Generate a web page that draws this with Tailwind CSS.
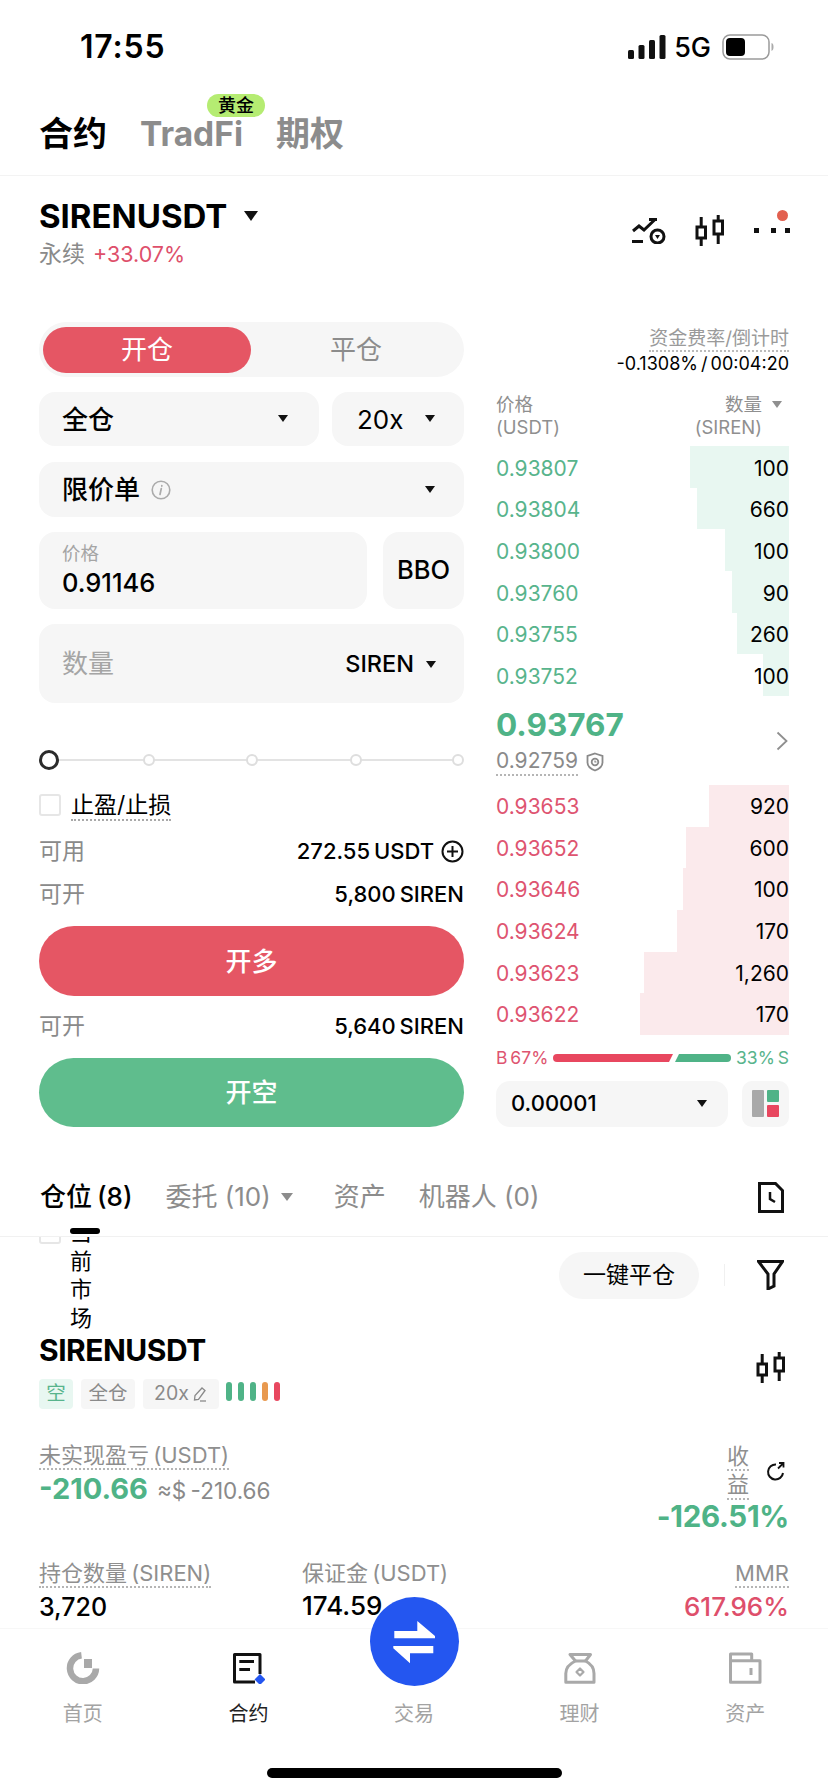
<!DOCTYPE html>
<html lang="zh-CN">
<head>
<meta charset="utf-8">
<script src="https://cdn.jsdelivr.net/npm/@tailwindcss/browser@4"></script>
<title>合约</title>
</head>
<body class="bg-white">
<div class="relative w-[828px] h-[1792px] overflow-hidden bg-white flex flex-col text-black font-['Inter','Noto_Sans_CJK_SC',sans-serif]">

  <!-- status bar -->
  <div class="h-[94px] shrink-0 flex items-center justify-between pl-[80px] pr-[54px]">
    <span class="text-[32px] leading-none font-semibold tracking-[0.8px]">17:55</span>
    <div class="flex items-center gap-[8px]">
      <svg width="38" height="24" viewBox="0 0 38 24"><g fill="#111"><rect x="0" y="15" width="6" height="9" rx="1.5"/><rect x="10.5" y="10" width="6" height="14" rx="1.5"/><rect x="21" y="5" width="6" height="19" rx="1.5"/><rect x="31.5" y="0" width="6" height="24" rx="1.5"/></g></svg>
      <span class="text-[27px] leading-none font-medium">5G</span>
      <svg width="52" height="26" viewBox="0 0 52 26" class="ml-[3px]"><rect x="1" y="1" width="46" height="24" rx="7" fill="none" stroke="#9a9a9a" stroke-width="1.5"/><rect x="4" y="4" width="19" height="18" rx="4" fill="#000"/><path d="M49.5 9c1.6.6 2 2.2 2 4s-.4 3.400-2 4z" fill="#aaa"/></svg>
    </div>
  </div>

  <!-- product tabs -->
  <div class="h-[82px] shrink-0 border-b border-[#f3f3f3] pl-[39px] flex items-start pt-[20px] gap-[33px] relative">
    <span class="text-[34px] leading-[40px] font-semibold">合约</span>
    <span class="relative text-[33.500px] leading-[40px] font-bold text-[#8c8c8c]">TradFi
      <span class="absolute left-[67px] -top-[20px] w-[58px] h-[23px] rounded-full bg-[#b5ec72] text-[18px] leading-[23px] font-medium text-black text-center">黄金</span>
    </span>
    <span class="text-[34px] leading-[40px] font-bold text-[#8c8c8c]">期权</span>
  </div>

  <!-- symbol header -->
  <div class="h-[146px] shrink-0 px-[39px] flex items-start justify-between">
    <div class="pt-[21px]">
      <div class="flex items-center gap-[17px]">
        <span class="text-[33px] leading-[38px] font-bold">SIRENUSDT</span>
        <svg width="14" height="10" viewBox="0 0 14 10" class="-mt-[1px]"><path d="M0 0h14L7 10z" fill="#111"/></svg>
      </div>
      <div class="flex items-center gap-[8px] mt-[5px] text-[23px] leading-[28px]">
        <span class="text-[#8a8a8a]">永续</span>
        <span class="text-[#de4f6b] text-[21.500px]">+33.07%</span>
      </div>
    </div>
    <div class="flex items-start pt-[39px] -mr-[1px]">
      <svg width="35" height="26" viewBox="0 0 35 26" fill="none" stroke="#111" stroke-width="3" class="mr-[28px] mt-[3px]"><path d="M1 13l6-5 5 4L23 1.500M17 1.500h8"/><path d="M0 23.500h11"/><circle cx="25.500" cy="18.500" r="6.500"/><path d="M23 17h5l-2.500 4z" fill="#111" stroke="none"/></svg>
      <svg width="30" height="31" viewBox="0 0 30 31" fill="none" stroke="#111" stroke-width="3" class="mr-[29px]"><rect x="2" y="12" width="8.500" height="11" /><path d="M6.200 2v10M6.200 23v8"/><rect x="19" y="6" width="8.500" height="13"/><path d="M23.200 0v6M23.200 19v10"/></svg>
      <div class="relative w-[36px] h-[32px] flex items-center">
        <i class="absolute left-[0px] top-[13px] w-[5px] h-[5px] bg-[#111] block"></i>
        <i class="absolute left-[17px] top-[13px] w-[5px] h-[5px] bg-[#111] block"></i>
        <i class="absolute left-[31px] top-[13px] w-[5px] h-[5px] bg-[#111] block"></i>
        <i class="absolute left-[23px] -top-[5px] w-[11px] h-[11px] rounded-full bg-[#e2604f]"></i>
      </div>
    </div>
  </div>

  <!-- trade area -->
  <div class="shrink-0 h-[805px] px-[39px] flex justify-between">
    <!-- left column -->
    <div class="w-[425px] flex flex-col">
      <div class="h-[55px] rounded-full bg-[#f6f6f6] flex items-center pl-[4px] text-[26px]">
        <div class="w-[208px] h-[46px] rounded-full bg-[#e55664] text-white flex items-center justify-center">开仓</div>
        <div class="flex-1 text-center text-[#8c8c8c] pr-[3px]">平仓</div>
      </div>
      <div class="flex gap-[13px] mt-[15px] h-[54px] text-[26px]">
        <div class="w-[280px] rounded-[16px] bg-[#f6f6f6] flex items-center justify-between pl-[23px] pr-[31px]">
          <span class="font-medium">全仓</span>
          <svg width="10" height="8" viewBox="0 0 10 8"><path d="M0 0h10L5 7z" fill="#111"/></svg>
        </div>
        <div class="flex-1 rounded-[16px] bg-[#f6f6f6] flex items-center justify-between pl-[25px] pr-[29px]">
          <span>20x</span>
          <svg width="10" height="8" viewBox="0 0 10 8"><path d="M0 0h10L5 7z" fill="#111"/></svg>
        </div>
      </div>
      <div class="mt-[16px] h-[55px] rounded-[16px] bg-[#f6f6f6] flex items-center justify-between pl-[23px] pr-[29px] text-[26px]">
        <span class="flex items-center gap-[11px] font-medium">限价单
          <svg width="20" height="20" viewBox="0 0 20 20" fill="none"><circle cx="10" cy="10" r="8.800" stroke="#ababab" stroke-width="1.600"/><path d="M10.800 5.500v.6M10.300 8.500 9 14.500" stroke="#ababab" stroke-width="1.700" stroke-linecap="round"/></svg>
        </span>
        <svg width="10" height="8" viewBox="0 0 10 8"><path d="M0 0h10L5 7z" fill="#111"/></svg>
      </div>
      <div class="flex gap-[16px] mt-[15px] h-[77px]">
        <div class="w-[328px] rounded-[16px] bg-[#f6f6f6] pl-[23px] pt-[9px]">
          <div class="text-[18.500px] leading-[24px] text-[#a5a5a5]">价格</div>
          <div class="text-[25.500px] leading-[32px] mt-[2px] font-medium">0.91146</div>
        </div>
        <div class="flex-1 rounded-[16px] bg-[#f6f6f6] flex items-center justify-center text-[25.500px] font-medium">BBO</div>
      </div>
      <div class="mt-[15px] h-[79px] rounded-[16px] bg-[#f6f6f6] flex items-center justify-between pl-[23px] pr-[28px]">
        <span class="text-[26px] text-[#a5a5a5]">数量</span>
        <span class="flex items-center gap-[12px] text-[23.500px] font-medium">SIREN
          <svg width="10" height="8" viewBox="0 0 10 8" class="mt-[2px]"><path d="M0 0h10L5 7z" fill="#111"/></svg>
        </span>
      </div>
      <!-- slider -->
      <div class="relative mt-[45px] h-[24px] flex items-center">
        <div class="absolute left-[10px] right-[2px] top-[11px] h-[2px] bg-[#e3e3e3]"></div>
        <i class="relative block w-[20px] h-[20px] rounded-full bg-white border-[3px] border-[#2b2b2b]"></i>
        <i class="relative block ml-[84px] w-[12px] h-[12px] rounded-full bg-white border-2 border-[#dedede]"></i>
        <i class="relative block ml-[91px] w-[12px] h-[12px] rounded-full bg-white border-2 border-[#dedede]"></i>
        <i class="relative block ml-[92px] w-[12px] h-[12px] rounded-full bg-white border-2 border-[#dedede]"></i>
        <i class="relative block ml-[90px] w-[12px] h-[12px] rounded-full bg-white border-2 border-[#dedede]"></i>
      </div>
      <div class="mt-[21px] h-[23px] flex items-center gap-[10px]">
        <i class="block w-[22px] h-[22px] rounded-[3px] border-2 border-[#e6e6e6]"></i>
        <span class="text-[23px] leading-[27px] border-b-2 border-dotted border-[#a9a9a9] mt-[3px]">止盈/止损</span>
      </div>
      <div class="mt-[20px] h-[30px] flex items-center justify-between [word-spacing:-2px]">
        <span class="text-[23px] text-[#8a8a8a]">可用</span>
        <span class="flex items-center gap-[7px] text-[22px] font-medium">272.55 USDT
          <svg width="23" height="23" viewBox="0 0 23 23" fill="none" stroke="#111" stroke-width="2"><circle cx="11.500" cy="11.500" r="10"/><path d="M6 11.500h11M11.500 6v11"/></svg>
        </span>
      </div>
      <div class="mt-[13px] h-[30px] flex items-center justify-between text-[22px] [word-spacing:-2px]">
        <span class="text-[23px] text-[#8a8a8a]">可开</span>
        <span class="font-medium">5,800 SIREN</span>
      </div>
      <div class="mt-[17px] h-[70px] rounded-full bg-[#e55664] text-white text-[26px] font-medium flex items-center justify-center">开多</div>
      <div class="mt-[15px] h-[30px] flex items-center justify-between text-[22px] [word-spacing:-2px]">
        <span class="text-[23px] text-[#8a8a8a]">可开</span>
        <span class="font-medium">5,640 SIREN</span>
      </div>
      <div class="mt-[17px] h-[69px] rounded-full bg-[#5fbd8d] text-white text-[26px] font-medium flex items-center justify-center">开空</div>
    </div>

    <!-- right column -->
    <div class="w-[293px] flex flex-col">
      <div class="h-[71px] pt-[5px] text-right">
        <div class="leading-[24px]"><span class="text-[19px] leading-[24px] text-[#9a9a9a] border-b-2 border-dotted border-[#bbb]">资金费率/倒计时</span></div>
        <div class="text-[18px] leading-[24px] mt-[1px] [word-spacing:-2px]">-0.1308% / 00:04:20</div>
      </div>
      <div class="h-[53px] flex justify-between text-[#8f8f8f] text-[18.500px] leading-[23px]">
        <div>价格<br>(USDT)</div>
        <div class="text-right pr-[27px] relative">数量<br>(SIREN)
          <svg width="10" height="7" viewBox="0 0 10 7" class="absolute right-[7px] top-[8px]"><path d="M0 0h10L5 7z" fill="#8f8f8f"/></svg>
        </div>
      </div>
      <div class="flex flex-col text-[21px]">
        <div class="h-[41.670px] pt-[3px] relative flex items-center justify-between"><i class="absolute right-0 top-0 bottom-0 w-[99px] bg-[#e8f7f1]"></i><span class="relative text-[#58b48c]">0.93807</span><span class="relative">100</span></div>
        <div class="h-[41.670px] pt-[3px] relative flex items-center justify-between"><i class="absolute right-0 top-0 bottom-0 w-[92px] bg-[#e8f7f1]"></i><span class="relative text-[#58b48c]">0.93804</span><span class="relative">660</span></div>
        <div class="h-[41.670px] pt-[3px] relative flex items-center justify-between"><i class="absolute right-0 top-0 bottom-0 w-[64px] bg-[#e8f7f1]"></i><span class="relative text-[#58b48c]">0.93800</span><span class="relative">100</span></div>
        <div class="h-[41.670px] pt-[3px] relative flex items-center justify-between"><i class="absolute right-0 top-0 bottom-0 w-[57px] bg-[#e8f7f1]"></i><span class="relative text-[#58b48c]">0.93760</span><span class="relative">90</span></div>
        <div class="h-[41.670px] pt-[3px] relative flex items-center justify-between"><i class="absolute right-0 top-0 bottom-0 w-[52px] bg-[#e8f7f1]"></i><span class="relative text-[#58b48c]">0.93755</span><span class="relative">260</span></div>
        <div class="h-[41.670px] pt-[3px] relative flex items-center justify-between"><i class="absolute right-0 top-0 bottom-0 w-[26px] bg-[#e8f7f1]"></i><span class="relative text-[#58b48c]">0.93752</span><span class="relative">100</span></div>
      </div>
      <div class="h-[89px] flex items-center justify-between">
        <div class="mt-[1px]">
          <div class="text-[31.500px] leading-[40px] font-bold text-[#4fb387]">0.93767</div>
          <div class="flex items-center gap-[8px] mt-[3px]">
            <span class="text-[21px] leading-[26px] text-[#8a8a8a] border-b-2 border-dotted border-[#b5b5b5]">0.92759</span>
            <svg width="18" height="20" viewBox="0 0 18 20" fill="none" stroke="#8a8a8a" stroke-width="1.800"><path d="M9 1.500 16.500 4v6.500c0 4-3.500 6.500-7.500 8-4-1.500-7.500-4-7.500-8V4z"/><circle cx="9" cy="10" r="3.300"/><path d="M9 8.500V10h1.500" stroke-width="1.200"/></svg>
          </div>
        </div>
        <svg width="12" height="20" viewBox="0 0 12 20" fill="none" stroke="#8f8f8f" stroke-width="1.800" class="mr-[1px] mt-[2px]"><path d="M1.500 1.500 10.500 10l-9 8.500"/></svg>
      </div>
      <div class="flex flex-col text-[21px]">
        <div class="h-[41.670px] pt-[2px] relative flex items-center justify-between"><i class="absolute right-0 top-0 bottom-0 w-[80px] bg-[#fbeaec]"></i><span class="relative text-[#de5470]">0.93653</span><span class="relative">920</span></div>
        <div class="h-[41.670px] pt-[2px] relative flex items-center justify-between"><i class="absolute right-0 top-0 bottom-0 w-[103px] bg-[#fbeaec]"></i><span class="relative text-[#de5470]">0.93652</span><span class="relative">600</span></div>
        <div class="h-[41.670px] pt-[2px] relative flex items-center justify-between"><i class="absolute right-0 top-0 bottom-0 w-[106px] bg-[#fbeaec]"></i><span class="relative text-[#de5470]">0.93646</span><span class="relative">100</span></div>
        <div class="h-[41.670px] pt-[2px] relative flex items-center justify-between"><i class="absolute right-0 top-0 bottom-0 w-[112px] bg-[#fbeaec]"></i><span class="relative text-[#de5470]">0.93624</span><span class="relative">170</span></div>
        <div class="h-[41.670px] pt-[2px] relative flex items-center justify-between"><i class="absolute right-0 top-0 bottom-0 w-[145px] bg-[#fbeaec]"></i><span class="relative text-[#de5470]">0.93623</span><span class="relative">1,260</span></div>
        <div class="h-[41.670px] pt-[2px] relative flex items-center justify-between"><i class="absolute right-0 top-0 bottom-0 w-[149px] bg-[#fbeaec]"></i><span class="relative text-[#de5470]">0.93622</span><span class="relative">170</span></div>
      </div>
      <div class="mt-[14px] h-[18px] flex items-center text-[17.500px] leading-[18px] [word-spacing:-2px]">
        <span class="text-[#de5470] w-[57px] whitespace-nowrap">B 67%</span>
        <svg width="178" height="8" viewBox="0 0 178 8" class="shrink-0"><path d="M4 0h116l-4 8H4a4 4 0 0 1 0-8z" fill="#e8475f"/><path d="M126 0h48a4 4 0 0 1 0 8h-52z" fill="#4fb387"/></svg>
        <span class="text-[#58b48c] flex-1 text-right whitespace-nowrap">33% S</span>
      </div>
      <div class="mt-[14px] h-[46px] flex justify-between">
        <div class="w-[232px] rounded-[14px] bg-[#f6f6f6] flex items-center justify-between pl-[15px] pr-[21px] text-[22px] font-medium">
          <span>0.00001</span>
          <svg width="10" height="8" viewBox="0 0 10 8"><path d="M0 0h10L5 7z" fill="#111"/></svg>
        </div>
        <div class="w-[47px] rounded-[10px] bg-[#f6f6f6] flex items-center justify-center gap-[3px]">
          <i class="block w-[12px] h-[27px] rounded-[1px] bg-[#a9a9a9]"></i>
          <div class="flex flex-col gap-[3px]">
            <i class="block w-[12px] h-[12px] rounded-[1px] bg-[#4fb387]"></i>
            <i class="block w-[12px] h-[12px] rounded-[1px] bg-[#e8475f]"></i>
          </div>
        </div>
      </div>
    </div>
  </div>

  <!-- positions tabs -->
  <div class="relative z-10 shrink-0 h-[110px] bg-white border-b border-[#f1f1f1] pl-[40px] pr-[44px] flex items-center justify-between pt-[32px]">
    <div class="flex items-center text-[26px] leading-[32px] text-[#8c8c8c] -mt-[1px]">
      <span class="text-black font-medium whitespace-nowrap [word-spacing:-2px]">仓位 (8)</span>
      <span class="ml-[33px] whitespace-nowrap">委托 (10)</span>
      <svg width="12" height="8" viewBox="0 0 12 8" class="ml-[10px]"><path d="M0 0h12L6 8z" fill="#8c8c8c"/></svg>
      <span class="ml-[41px]">资产</span>
      <span class="ml-[33px] whitespace-nowrap">机器人 (0)</span>
    </div>
    <svg width="26" height="31" viewBox="0 0 26 31" fill="none" stroke="#111" stroke-width="3"><path d="M1.500 1.500h16l7 7v21h-23z"/><path d="M12 10v7l5 3" stroke-width="2.500"/></svg>
    <i class="absolute left-[70px] bottom-[2px] w-[30px] h-[6px] rounded-full bg-black"></i>
  </div>

  <!-- position card -->
  <div class="flex-1 min-h-0 overflow-hidden px-[39px]">
    <div class="-mt-[19px] flex justify-between items-center">
      <div class="flex items-start gap-[9px] self-start">
        <i class="block w-[22px] h-[22px] mt-[4px] rounded-[3px] border-2 border-[#e6e6e6]"></i>
        <div class="w-[22px] text-[22px] leading-[28.500px]">当前市场</div>
      </div>
      <div class="flex items-center">
        <div class="w-[140px] h-[47px] rounded-full bg-[#f6f6f6] flex items-center justify-center text-[23px]">一键平仓</div>
        <i class="block w-[1px] h-[22px] bg-[#f0f0f0] ml-[25px]"></i>
        <svg width="27" height="30" viewBox="0 0 27 30" fill="none" stroke="#111" stroke-width="3" class="ml-[32px] mr-[5px]"><path d="M1.500 1.500h24L17 14v12l-6 3V14z"/></svg>
      </div>
    </div>
    <div class="flex justify-between items-center">
      <div>
        <div class="text-[30px] leading-[36px] font-bold tracking-[-0.5px]">SIRENUSDT</div>
        <div class="mt-[11px] h-[30px] flex items-center gap-[8px] text-[19.500px] text-[#8a8a8a]">
          <span class="w-[34px] h-[30px] rounded-[4px] bg-[#e8f7f1] text-[#58b48c] flex items-center justify-center">空</span>
          <span class="w-[54px] h-[30px] rounded-[4px] bg-[#f6f6f6] flex items-center justify-center">全仓</span>
          <span class="w-[76px] h-[30px] rounded-[4px] bg-[#f6f6f6] flex items-center justify-center gap-[3px]">20x
            <svg width="16" height="16" viewBox="0 0 16 16" fill="none" stroke="#8a8a8a" stroke-width="1.300"><path d="M2.500 14 3 9.500 10 2l3 2.500-6.500 9z"/><path d="M8 15h6"/></svg>
          </span>
          <span class="flex gap-[6px] -ml-[1px] -mt-[5px]">
            <i class="block w-[6px] h-[19px] rounded-full bg-[#4fb387]"></i>
            <i class="block w-[6px] h-[19px] rounded-full bg-[#4fb387]"></i>
            <i class="block w-[6px] h-[19px] rounded-full bg-[#4fb387]"></i>
            <i class="block w-[6px] h-[19px] rounded-full bg-[#e8994f]"></i>
            <i class="block w-[6px] h-[19px] rounded-full bg-[#e8475f]"></i>
          </span>
        </div>
      </div>
      <svg width="30" height="31" viewBox="0 0 30 31" fill="none" stroke="#111" stroke-width="3" class="-mt-[7px] mr-[3px]"><rect x="2" y="12" width="8.500" height="11" /><path d="M6.200 2v10M6.200 23v8"/><rect x="19" y="6" width="8.500" height="13"/><path d="M23.200 0v6M23.200 19v10"/></svg>
    </div>
    <div class="mt-[33px] flex justify-between items-start">
      <div>
        <span class="text-[22px] leading-[26px] inline-block text-[#8f8f8f] border-b-2 border-dotted border-[#b5b5b5] whitespace-nowrap [word-spacing:-2px]">未实现盈亏 (USDT)</span>
        <div class="flex items-baseline gap-[9px] mt-[1px]">
          <span class="text-[29px] leading-[36px] font-bold text-[#4fb387]">-210.66</span>
          <span class="text-[22.500px] text-[#8a8a8a] [word-spacing:-2px]">≈$ -210.66</span>
        </div>
      </div>
      <div class="flex flex-col items-end">
        <div class="flex items-center">
          <div class="w-[22px] text-[22px] leading-[28px] text-[#8f8f8f]"><span class="border-b-2 border-dotted border-[#b5b5b5]">收</span><span class="border-b-2 border-dotted border-[#b5b5b5] block">益</span></div>
          <svg width="20" height="20" viewBox="0 0 20 20" fill="none" stroke="#111" stroke-width="2" class="ml-[17px] mr-[3px]"><path d="M10 3.500A7.500 7.500 0 1 0 17 12"/><path d="M12 7.500 17.500 2M13 2h4.500v4.500" stroke-width="1.800"/></svg>
        </div>
        <div class="text-[29.500px] leading-[34px] font-bold text-[#4fb387] -mt-[1px] tracking-[-0.3px]">-126.51%</div>
      </div>
    </div>
    <div class="mt-[27px] flex justify-between">
      <div class="w-[263px]">
        <span class="text-[22px] leading-[26px] inline-block text-[#8f8f8f] border-b-2 border-dotted border-[#b5b5b5] whitespace-nowrap [word-spacing:-2px]">持仓数量 (SIREN)</span>
        <div class="text-[25px] leading-[32px] font-medium mt-[3px]">3,720</div>
      </div>
      <div class="flex-1">
        <span class="text-[22px] leading-[26px] inline-block text-[#8f8f8f] whitespace-nowrap [word-spacing:-2px]">保证金 (USDT)</span>
        <div class="text-[26px] leading-[32px] font-medium mt-[3px]">174.59</div>
      </div>
      <div class="text-right">
        <span class="text-[22px] leading-[26px] inline-block text-[#8f8f8f] border-b-2 border-dotted border-[#b5b5b5]">MMR</span>
        <div class="text-[26px] leading-[32px] font-medium text-[#de4f6b] mt-[3px]">617.96%</div>
      </div>
    </div>
  </div>

  <!-- bottom nav -->
  <div class="relative z-10 shrink-0 h-[164px] bg-white border-t border-[#f7f7f7] grid grid-cols-5 pt-[23px]">
    <div class="flex flex-col items-center text-[20px] leading-[26px] text-[#a3a3a3]">
      <svg width="34" height="32" viewBox="0 0 34 32" class="block" fill="none"><path d="M15.500 3.300A13 13 0 1 0 30 16.500" stroke="#a9a9a9" stroke-width="6.500"/><rect x="18" y="7" width="8" height="9" fill="#a9a9a9"/></svg>
      <span class="mt-[17px]">首页</span>
    </div>
    <div class="flex flex-col items-center text-[20px] leading-[26px] text-[#222]">
      <svg width="34" height="32" viewBox="0 0 34 32" class="block" fill="none"><path d="M29 22V2.500H3.500V30H24" stroke="#111" stroke-width="3" stroke-linejoin="round"/><path d="M8.300 9.500h14.700M8.300 17.500h10.700" stroke="#111" stroke-width="3"/><path d="M29 22l5.500 5.500L29 33l-5.500-5.500z" fill="#2456f0"/></svg>
      <span class="mt-[17px]">合约</span>
    </div>
    <div class="flex flex-col items-center justify-end text-[20px] leading-[26px] text-[#a3a3a3] h-[75px]">
      <span>交易</span>
    </div>
    <div class="flex flex-col items-center text-[20px] leading-[26px] text-[#a3a3a3]">
      <svg width="34" height="32" viewBox="0 0 34 32" class="block" fill="none" stroke="#a9a9a9" stroke-width="3" stroke-linejoin="round"><path d="M7 2.500h20.500L22.500 9c5 2.500 8.500 7 8.500 12.500v8.800H2.800v-8.800C2.800 16 7 11.500 12.500 9z"/><path d="M12.500 9h10"/><path d="M17 16.500l3.500 3.500-3.500 3.500-3.500-3.500z" stroke-width="2.200"/></svg>
      <span class="mt-[17px]">理财</span>
    </div>
    <div class="flex flex-col items-center text-[20px] leading-[26px] text-[#a3a3a3]">
      <svg width="34" height="32" viewBox="0 0 34 32" class="block" fill="none" stroke="#a9a9a9" stroke-width="3" stroke-linejoin="round"><path d="M23.700 8.700V2H2.500v28.300H32V8.700H2.500"/><path d="M23 16v7"/></svg>
      <span class="mt-[17px]">资产</span>
    </div>
    <i class="absolute left-[267px] top-[139px] w-[295px] h-[10px] rounded-full bg-black"></i>
    <div class="absolute left-[370px] -top-[32px] w-[89px] h-[89px] rounded-full bg-[#2456f0] flex items-center justify-center">
      <svg width="44" height="46" viewBox="0 0 44 46" fill="#fff" class="mt-[3px]"><path d="M24.300 1 42 16v2.300H1.300V11h23z"/><path d="M40.300 26v7.300H17v10L.3 28.300V26z"/></svg>
    </div>
  </div>
</div>
</body>
</html>
